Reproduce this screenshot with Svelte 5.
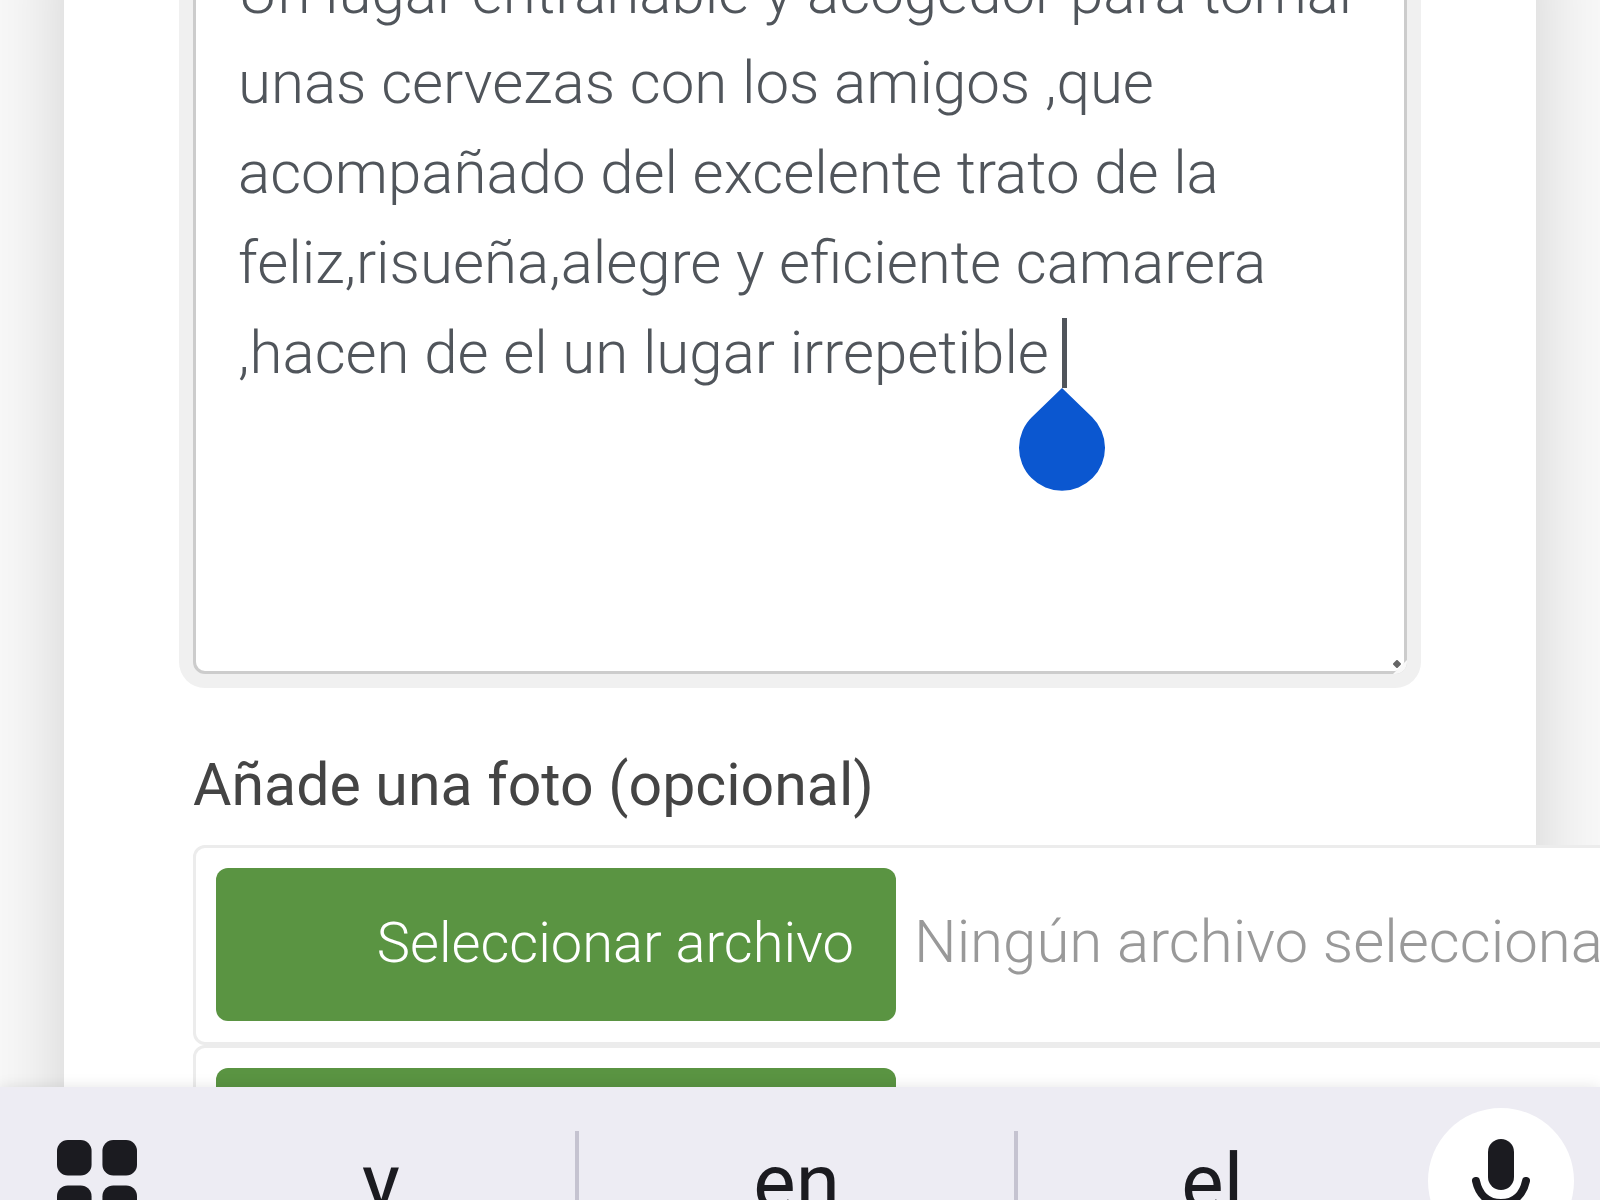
<script>
    let comment = $state('Un lugar entrañable y acogedor para tomar unas cervezas con los amigos ,que acompañado del excelente trato de la feliz,risueña,alegre y eficiente camarera ,hacen de el un lugar irrepetible');

    const photos = ['foto-1', 'foto-2'];
    const suggestions = ['y', 'en', 'el'];
    let inputs = $state([]);
</script>

<div class="screen">
    <main>
        <form class="card">
            <div class="comment">
                <textarea aria-label="Comentario" spellcheck="false" bind:value={comment}></textarea>
                <span class="caret"></span>
                <svg class="handle" viewBox="0 0 86 104" aria-hidden="true">
                    <path d="M43 1 L73 30 A43 43 0 1 1 13 30 Z" fill="#0b57d0" />
                </svg>
                <svg class="grip" viewBox="0 0 14 14" aria-hidden="true">
                    <path d="M14 0 V14 H0 Z" fill="#f8f8f8" />
                    <path d="M4 1 L7 4 L4 7 L1 4 Z" fill="#666" stroke="#666" stroke-width="2" stroke-linejoin="round" />
                </svg>
            </div>

            <label class="title" for="foto-1">Añade una foto (opcional)</label>
            {#each photos as id, i}
                <div class="file">
                    <input {id} type="file" accept="image/*" aria-label="Foto {i + 1}" bind:this={inputs[i]} />
                    <button type="button" onclick={() => inputs[i].click()}>Seleccionar archivo</button>
                    <span>Ningún archivo seleccionado</span>
                </div>
            {/each}
        </form>
    </main>

    <div class="keyboard">
        <button class="apps" aria-label="Menú">
            <svg viewBox="0 0 81 81">
                <rect width="35" height="36" rx="11" />
                <rect x="46" width="35" height="36" rx="11" />
                <rect y="46" width="35" height="35" rx="11" />
                <rect x="46" y="46" width="35" height="35" rx="11" />
            </svg>
        </button>
        <div class="words">
            {#each suggestions as word}
                <button>{word}</button>
            {/each}
        </div>
        <button class="mic" aria-label="Dictado por voz">
            <svg viewBox="0 0 146 146">
                <rect x="60" y="31" width="26" height="51" rx="13" />
                <path d="M48 73 C51 87 60 95 73 95 C86 95 95 87 98 73 M73 95 V110" />
            </svg>
        </button>
    </div>
</div>

<style>
    :global(body) {
        margin: 0;
    }
    .screen {
        display: flex;
        flex-direction: column;
        height: 100vh;
        overflow: hidden;
        background: #f9f9f9;
        font-family: Roboto, sans-serif;
        font-size: 60px;
        line-height: 90px;
    }
    button {
        border: 0;
        padding: 0;
        background: none;
        font: inherit;
        cursor: pointer;
    }
    main {
        flex: 1;
        min-height: 0;
        overflow: hidden;
    }
    /* the form is scrolled so that the first line is cut by the top edge */
    .card {
        margin: -80px 64px 0;
        padding: 0 129px;
        background: #fff;
        box-shadow: 0 0 80px rgba(0, 0, 0, .17);
    }
    .comment {
        position: relative;
    }
    textarea {
        display: block;
        box-sizing: border-box;
        width: 100%;
        height: 754px;
        padding: 25px 42px;
        border: 3px solid #ccc;
        border-radius: 12px;
        outline: 0;
        box-shadow: 0 0 0 14px #f0f0f0;
        color: #50555b;
        font: inherit;
        font-weight: 300;
        overflow: hidden;
        resize: none;
    }
    .caret {
        position: absolute;
        left: 869px;
        top: 398px;
        width: 5px;
        height: 70px;
        background: #50555b;
    }
    .handle {
        position: absolute;
        left: 826px;
        top: 467px;
        width: 86px;
    }
    .grip {
        position: absolute;
        right: 0;
        bottom: 0;
        width: 14px;
        border-bottom-right-radius: 12px;
    }
    .title {
        display: block;
        padding: 66px 0 15px;
        color: #444;
        font-size: 59px;
    }
    .file {
        display: flex;
        align-items: baseline;
        box-sizing: border-box;
        width: max-content;
        padding: 20px 20px 21px;
        border: 3px solid #ececec;
        border-radius: 12px;
        background: #fff;
        color: #999;
        font-weight: 300;
    }
    .file input {
        position: absolute;
        width: 1px;
        height: 1px;
        opacity: 0;
        pointer-events: none;
    }
    .file button {
        width: 680px;
        height: 153px;
        margin-right: 18px;
        padding: 0 42px 4px 0;
        border-radius: 12px;
        background: #5a9442;
        color: #fff;
        font-size: 56px;
        text-align: right;
    }
    .keyboard {
        display: flex;
        position: relative;
        height: 113px;
        padding: 0 26px 0 57px;
        background: #edecf3;
        box-shadow: 0 0 14px rgba(0, 0, 0, .1);
        color: #1b1b20;
    }
    .keyboard svg {
        display: block;
    }
    .apps {
        align-self: flex-start;
        width: 80px;
        margin-top: 53px;
        fill: #1b1b20;
    }
    .words {
        display: flex;
        flex: 1;
        height: 104px;
        margin: 44px 22px 0 50px;
    }
    .words button {
        flex: 1;
        color: #1b1b20;
        font-size: 80px;
    }
    .words button + button {
        border-left: 4px solid #c5c3d0;
    }
    .words button:nth-child(2) {
        padding: 0 24px;
    }
    .mic {
        align-self: flex-start;
        width: 146px;
        margin-top: 21px;
        border-radius: 50%;
        background: #fff;
    }
    .mic rect {
        fill: #1b1b20;
    }
    .mic path {
        fill: none;
        stroke: #1b1b20;
        stroke-width: 8;
        stroke-linecap: round;
    }
</style>
